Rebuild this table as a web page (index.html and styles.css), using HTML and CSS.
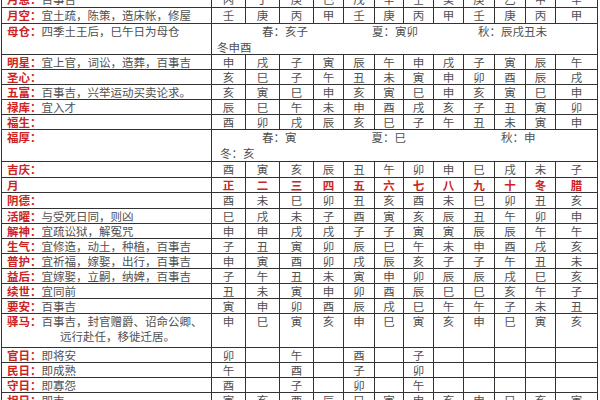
FILE: index.html
```html
<!DOCTYPE html>
<html lang="zh-CN">
<head>
<meta charset="utf-8">
<title>建除诸神吉日表</title>
<link rel="stylesheet" href="styles.css">
</head>
<body>
<table class="almanac">
<colgroup>
<col class="c-label">
<col class="c34"><col class="c34"><col class="c34">
<col class="c30"><col class="c31"><col class="c29"><col class="c30">
<col class="c30"><col class="c31"><col class="c31"><col class="c30">
<col class="c42">
</colgroup>
<tbody>
<tr class="h16"><td class="lbl"><b>月恩：</b>百事吉</td><td>丙</td><td>丁</td><td>庚</td><td>己</td><td>戊</td><td>辛</td><td>壬</td><td>癸</td><td>庚</td><td>乙</td><td>甲</td><td>辛</td></tr>
<tr class="h16"><td class="lbl"><b>月空：</b>宜土疏，陈策，造床帐，修屋</td><td>壬</td><td>庚</td><td>丙</td><td>甲</td><td>壬</td><td>庚</td><td>丙</td><td>甲</td><td>壬</td><td>庚</td><td>丙</td><td>甲</td></tr>
<tr class="h31"><td class="lbl"><b>母仓：</b>四季土王后，巳午日为母仓</td><td colspan="12" class="season"><span class="line one"><span class="s1">春：亥子</span><span class="s2">夏：寅卯</span><span class="s3">秋：辰戌丑未</span></span><span class="line two">冬申酉</span></td></tr>
<tr><td class="lbl"><b>明星：</b>宜上官，词讼，造葬，百事吉</td><td>申</td><td>戌</td><td>子</td><td>寅</td><td>辰</td><td>午</td><td>申</td><td>戌</td><td>子</td><td>寅</td><td>辰</td><td>午</td></tr>
<tr><td class="lbl"><b>圣心：</b></td><td>亥</td><td>巳</td><td>子</td><td>午</td><td>丑</td><td>未</td><td>寅</td><td>申</td><td>卯</td><td>酉</td><td>辰</td><td>戌</td></tr>
<tr><td class="lbl"><b>五富：</b>百事吉，兴举运动买卖论求。</td><td>亥</td><td>寅</td><td>巳</td><td>申</td><td>亥</td><td>寅</td><td>巳</td><td>申</td><td>亥</td><td>寅</td><td>巳</td><td>申</td></tr>
<tr><td class="lbl"><b>禄库：</b>宜入才</td><td>辰</td><td>巳</td><td>午</td><td>未</td><td>申</td><td>酉</td><td>戌</td><td>亥</td><td>子</td><td>丑</td><td>寅</td><td>卯</td></tr>
<tr><td class="lbl"><b>福生：</b></td><td>酉</td><td>卯</td><td>戌</td><td>辰</td><td>亥</td><td>巳</td><td>子</td><td>午</td><td>丑</td><td>未</td><td>寅</td><td>申</td></tr>
<tr class="h32"><td class="lbl"><b>福厚：</b></td><td colspan="12" class="season"><span class="line one"><span class="f1">春：寅</span><span class="f2">夏：巳</span><span class="f3">秋：申</span></span><span class="line two f4">冬：亥</span></td></tr>
<tr class="h16"><td class="lbl"><b>吉庆：</b></td><td>酉</td><td>寅</td><td>亥</td><td>辰</td><td>丑</td><td>午</td><td>卯</td><td>申</td><td>巳</td><td>戌</td><td>未</td><td>子</td></tr>
<tr class="month"><td class="lbl"><b>月</b></td><td>正</td><td>二</td><td>三</td><td>四</td><td>五</td><td>六</td><td>七</td><td>八</td><td>九</td><td>十</td><td>冬</td><td>腊</td></tr>
<tr class="h16"><td class="lbl"><b>阴德：</b></td><td>酉</td><td>未</td><td>巳</td><td>卯</td><td>丑</td><td>亥</td><td>酉</td><td>未</td><td>巳</td><td>卯</td><td>丑</td><td>亥</td></tr>
<tr><td class="lbl"><b>活曜：</b>与受死日同，则凶</td><td>巳</td><td>戌</td><td>未</td><td>子</td><td>酉</td><td>寅</td><td>亥</td><td>辰</td><td>丑</td><td>午</td><td>卯</td><td>申</td></tr>
<tr><td class="lbl"><b>解神：</b>宜疏讼狱，解冤咒</td><td>申</td><td>申</td><td>戌</td><td>戌</td><td>子</td><td>子</td><td>寅</td><td>寅</td><td>辰</td><td>辰</td><td>午</td><td>午</td></tr>
<tr><td class="lbl"><b>生气：</b>宜修造，动土，种植，百事吉</td><td>子</td><td>丑</td><td>寅</td><td>卯</td><td>辰</td><td>巳</td><td>午</td><td>未</td><td>申</td><td>酉</td><td>戌</td><td>亥</td></tr>
<tr><td class="lbl"><b>普护：</b>宜祈福，嫁娶，出行，百事吉</td><td>申</td><td>寅</td><td>酉</td><td>卯</td><td>戌</td><td>辰</td><td>亥</td><td>子</td><td>子</td><td>午</td><td>丑</td><td>未</td></tr>
<tr><td class="lbl"><b>益后：</b>宜嫁娶，立嗣，纳婢，百事吉</td><td>子</td><td>午</td><td>丑</td><td>未</td><td>寅</td><td>申</td><td>卯</td><td>辰</td><td>辰</td><td>戌</td><td>巳</td><td>亥</td></tr>
<tr><td class="lbl"><b>续世：</b>宜同前</td><td>丑</td><td>未</td><td>寅</td><td>申</td><td>卯</td><td>酉</td><td>辰</td><td>巳</td><td>巳</td><td>亥</td><td>午</td><td>子</td></tr>
<tr><td class="lbl"><b>要安：</b>百事吉</td><td>寅</td><td>申</td><td>卯</td><td>酉</td><td>辰</td><td>戌</td><td>巳</td><td>午</td><td>午</td><td>子</td><td>未</td><td>丑</td></tr>
<tr class="h34"><td class="lbl"><b>驿马：</b>百事吉，封官赠爵、诏命公卿、<span class="cont">远行赴任，移徙迁居。</span></td><td>申</td><td>巳</td><td>寅</td><td>亥</td><td>申</td><td>巳</td><td>寅</td><td>亥</td><td>申</td><td>巳</td><td>寅</td><td>亥</td></tr>
<tr><td class="lbl"><b>官日：</b>即将安</td><td>卯</td><td></td><td>午</td><td></td><td>酉</td><td></td><td>子</td><td></td><td></td><td></td><td></td><td></td></tr>
<tr><td class="lbl"><b>民日：</b>即成熟</td><td>午</td><td></td><td>酉</td><td></td><td>子</td><td></td><td>卯</td><td></td><td></td><td></td><td></td><td></td></tr>
<tr><td class="lbl"><b>守日：</b>即寡怨</td><td>酉</td><td></td><td>子</td><td></td><td>卯</td><td></td><td>午</td><td></td><td></td><td></td><td></td><td></td></tr>
<tr><td class="lbl"><b>相日：</b>即吉</td><td>寅</td><td>亥</td><td>酉</td><td>辰</td><td>巳</td><td>寅</td><td>申</td><td>亥</td><td>申</td><td>巳</td><td>亥</td><td>寅</td></tr>
</tbody>
</table>
</body>
</html>
```
FILE: styles.css
```css
html, body {
  margin: 0;
  padding: 0;
  background: #ffffff;
  overflow: hidden;
}

body {
  font-family: "Noto Sans CJK SC", "Noto Sans CJK TC", sans-serif;
  font-size: 11.5px;
  color: #505050;
}

.almanac {
  border-collapse: collapse;
  table-layout: fixed;
  width: 596px;
  margin: -9px 0 0 1px;
}

.c-label { width: 210px; }
.c29 { width: 29px; }
.c30 { width: 30px; }
.c31 { width: 31px; }
.c34 { width: 34px; }
.c42 { width: 42px; }

.almanac tr { height: 15px; }
.almanac tr.h16 { height: 16px; }
.almanac tr.h31 { height: 31px; }
.almanac tr.h32 { height: 32px; }
.almanac tr.h34 { height: 34px; }

.almanac td {
  border: 1px solid #333333;
  padding: 0;
  line-height: 14px;
  text-align: center;
  vertical-align: top;
  white-space: nowrap;
  overflow: hidden;
}

.almanac td.lbl {
  text-align: left;
  padding-left: 5px;
}

.lbl b {
  color: #cc2424;
  font-weight: 700;
}

.month td {
  color: #cc2424;
  font-weight: 700;
}

.cont {
  display: block;
  padding-left: 53px;
  margin-top: 1px;
}

.season {
  text-align: left;
}

.season .line {
  display: block;
  text-align: left;
}

.season .one { padding-left: 50px; }
.season .two { padding-left: 5px; margin-top: 2px; }

.s2 { margin-left: 64px; }
.s3 { margin-left: 60px; }

.f2 { margin-left: 75px; }
.f3 { margin-left: 95px; }
.season .f4 { padding-left: 8px; }
```
